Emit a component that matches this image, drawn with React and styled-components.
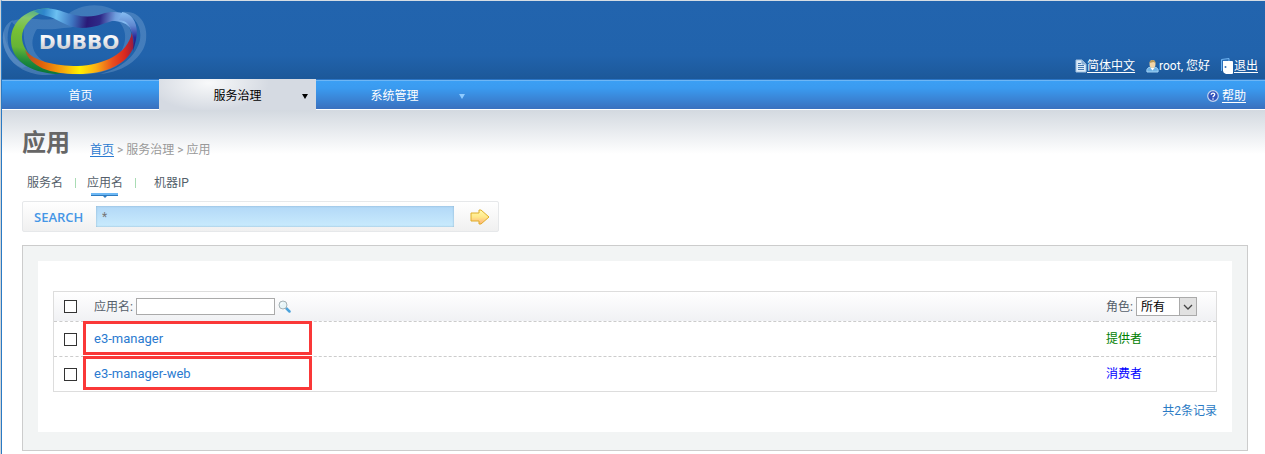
import styled, { createGlobalStyle } from "styled-components";

const menu = [
  { label: "首页" },
  { label: "服务治理", active: true, arrow: "#000000" },
  { label: "系统管理", arrow: "#8fcbff" },
];

const applications = [
  { name: "e3-manager", role: "提供者", color: "#008000" },
  { name: "e3-manager-web", role: "消费者", color: "#0000ff" },
];

const Logo = () => (
  <svg width="148" height="78" viewBox="2 1 148 78" role="img" aria-label="DUBBO">
    <defs>
      <linearGradient id="green" x1="50" x2="40" y1="8" y2="74" gradientUnits="userSpaceOnUse">
        <stop offset="0" stopColor="#3aa09a" />
        <stop offset="0.2" stopColor="#86c76a" />
        <stop offset="0.4" stopColor="#78c034" />
        <stop offset="0.65" stopColor="#66b436" />
        <stop offset="0.85" stopColor="#1d8a3c" />
        <stop offset="1" stopColor="#05713a" />
      </linearGradient>
      <linearGradient id="blue" x1="34" x2="138" y1="8" y2="22" gradientUnits="userSpaceOnUse">
        <stop offset="0" stopColor="#2f8fae" />
        <stop offset="0.1" stopColor="#2f86cc" />
        <stop offset="0.22" stopColor="#6cc0f2" />
        <stop offset="0.38" stopColor="#3d74c0" />
        <stop offset="0.52" stopColor="#2a1a78" />
        <stop offset="0.64" stopColor="#2f2a88" />
        <stop offset="0.78" stopColor="#6f9ede" />
        <stop offset="0.88" stopColor="#86bdf2" />
        <stop offset="1" stopColor="#3a5cb0" />
      </linearGradient>
      <linearGradient id="fire" x1="25" x2="134" y1="0" y2="0" gradientUnits="userSpaceOnUse">
        <stop offset="0" stopColor="#b0502c" />
        <stop offset="0.15" stopColor="#e0600c" />
        <stop offset="0.35" stopColor="#f7a80c" />
        <stop offset="0.5" stopColor="#fff000" />
        <stop offset="0.65" stopColor="#fbb014" />
        <stop offset="0.8" stopColor="#e8501e" />
        <stop offset="0.92" stopColor="#d8261e" />
        <stop offset="1" stopColor="#8e1f46" />
      </linearGradient>
      <linearGradient id="violet" x1="0" x2="0" y1="0" y2="1">
        <stop offset="0" stopColor="#86bdf2" />
        <stop offset="0.35" stopColor="#6088d0" />
        <stop offset="0.65" stopColor="#28289a" />
        <stop offset="1" stopColor="#2a1a6a" />
      </linearGradient>
      <linearGradient id="metal" x1="0" x2="0" y1="0" y2="1">
        <stop offset="0" stopColor="#ffffff" />
        <stop offset="0.4" stopColor="#f2f2f4" />
        <stop offset="1" stopColor="#b5b8be" />
      </linearGradient>
    </defs>
    <g fill="#a9c7e6" fillRule="evenodd">
      <path d="M12 21C28 15 48 24 66 16C80 2 106 2 120 14C134 28 136 46 124 60C112 73 84 78 58 72C30 66 22 46 24 28C18 26 12 25 12 21ZM37 29C27 44 34 60 54 66C84 72 112 66 122 50C130 34 122 20 110 16C94 14 84 28 64 28C52 30 44 29 37 29Z" opacity="0.22" />
      <path d="M13 20C0 26 1 44 7 54C15 70 36 78 56 74L46 71C30 70 16 62 10 50C6 40 7 28 13 20Z" opacity="0.26" />
      <path d="M122 12C142 10 148 28 146 40C144 56 126 72 100 74C122 68 136 56 140 40C142 28 136 16 122 12Z" opacity="0.26" />
      <path d="M4 30C4 46 14 58 28 66L22 68C6 62 0 42 4 30Z" opacity="0.16" />
    </g>
    <path d="M50 8C26 8 11 22 11 40C11 59 28 73 58 74L64 72C42 68 22 54 22 37C22 27 30 16 46 11Z" fill="url(#green)" />
    <path d="M25 50C34 61 54 66 78 66C102 65 128 55 132 32L134 46C128 64 106 74 78 74C50 74 30 67 25 50Z" fill="url(#fire)" />
    <path d="M34 11C44 7 54 8 64 12C78 17 92 18 102 14C114 10 128 12 134 21C137 26 137 34 136 40L131 30C128 23 120 21 112 21C102 24 94 28 82 28C66 28 58 18 46 16C41 15 38 13 34 11Z" fill="url(#blue)" />
    <path d="M122 12C134 14 139 26 136 40L133 51C134 42 134 36 131 30C130 25 127 21 119 20Z" fill="url(#violet)" />
    <text x="39" y="49" fontFamily="DejaVu Sans, sans-serif" fontSize="20" fontWeight="700" fill="url(#metal)">
      DUBBO
    </text>
  </svg>
);

const DocIcon = () => (
  <svg width="12" height="14" viewBox="0 0 12 14" aria-hidden="true">
    <path d="M1 1H7L11 5V13H1Z" fill="#dcebf8" stroke="#a3c3e2" />
    <path d="M7 1V5H11" fill="#8fb4da" stroke="#7fa7d0" />
    <path d="M3 4.5H6M3 6.5H9M3 8.5H9M3 10.5H9" stroke="#477bb2" />
  </svg>
);

const UserIcon = () => (
  <svg width="13" height="14" viewBox="0 0 13 14" aria-hidden="true">
    <path d="M1 13C0 9 3 8 6.500 8C10 8 13 9 12 13Z" fill="#6fb3e6" stroke="#a3d2f4" />
    <path d="M4.500 9L6.500 11.500L8.500 9Z" fill="#ffffff" />
    <ellipse cx="6.500" cy="5" rx="3" ry="4" fill="#f2d5a8" />
    <path d="M3.500 4C3.500 0 9.500 0 9.500 4L7.500 3Z" fill="#b39658" />
  </svg>
);

const DoorIcon = () => (
  <svg width="13" height="16" viewBox="0 0 13 16" aria-hidden="true">
    <path d="M0.500 13V1.500L8 0.500V3" fill="#2c70b8" stroke="#6fb3f0" />
    <path d="M2 3H11Q12 3 12 4V15Q12 16 11 16H5Q2 15 2 13Z" fill="#ffffff" />
    <circle cx="4.500" cy="9" r="1" fill="#3571b5" />
  </svg>
);

const HelpIcon = () => (
  <svg width="12" height="12" viewBox="0 0 12 12" aria-hidden="true">
    <circle cx="6" cy="6" r="5.300" fill="#3353bd" stroke="#c3d3ef" strokeWidth="1.200" />
    <path d="M4.200 4.800C4.200 2.400 7.900 2.600 7.700 4.700C7.600 5.900 6 5.900 6 7.300" fill="none" stroke="#ffffff" strokeWidth="1.300" />
    <circle cx="6" cy="9" r="0.800" fill="#ffffff" />
  </svg>
);

const ArrowIcon = () => (
  <svg width="20" height="16" viewBox="0 0 20 16" aria-hidden="true">
    <defs>
      <linearGradient id="gold" x1="0" x2="0" y1="0" y2="1">
        <stop offset="0" stopColor="#fffbb0" />
        <stop offset="0.5" stopColor="#ffe88a" />
        <stop offset="1" stopColor="#ffb07a" />
      </linearGradient>
    </defs>
    <path d="M1 4H9V1H11L19 8L11 15H9V12H1Z" fill="url(#gold)" stroke="#dfae28" strokeLinejoin="round" />
  </svg>
);

const LensIcon = () => (
  <svg width="13" height="13" viewBox="0 0 13 13" aria-hidden="true">
    <path d="M8 8L11.500 11.500" stroke="#4ba3dc" strokeWidth="2.500" strokeLinecap="round" />
    <circle cx="5" cy="5" r="4" fill="#e6f4f7" stroke="#a5b1b5" />
    <path d="M3 5C3 3.500 4 3 5 3" fill="none" stroke="#ffffff" />
  </svg>
);

const App = () => {
  return (
    <>
      <GlobalStyle />
      <Page>
        <Header>
          <Logo />
          <UserBar>
            <IconLink href="#lang">
              <DocIcon />
              <span>简体中文</span>
            </IconLink>
            <UserName>
              <UserIcon />
              root, 您好
            </UserName>
            <IconLink href="#logout">
              <DoorIcon />
              <span>退出</span>
            </IconLink>
          </UserBar>
        </Header>
        <Nav>
          {menu.map((item) => (
            <NavItem key={item.label} href="#nav" $active={item.active}>
              <span>{item.label}</span>
              {item.arrow && <Caret $color={item.arrow} />}
            </NavItem>
          ))}
          <Help>
            <IconLink href="#help" $gap="3px">
              <HelpIcon />
              <span>帮助</span>
            </IconLink>
          </Help>
        </Nav>
        <Content>
          <TitleRow>
            <h1>应用</h1>
            <Breadcrumb>
              <a href="#home">首页</a> &gt; 服务治理 &gt; 应用
            </Breadcrumb>
          </TitleRow>
          <Tabs>
            <Tab href="#service">服务名</Tab>
            <Divider />
            <Tab href="#application" $active>
              应用名
            </Tab>
            <Divider />
            <Tab href="#address" $last>
              机器IP
            </Tab>
          </Tabs>
          <SearchBar>
            <label htmlFor="keyword">SEARCH</label>
            <SearchInput id="keyword" defaultValue="*" />
            <IconButton type="button" aria-label="搜索">
              <ArrowIcon />
            </IconButton>
          </SearchBar>
          <Panel>
            <Sheet>
              <Table>
                <thead>
                  <tr>
                    <CheckHead>
                      <Checkbox type="checkbox" aria-label="全选" />
                    </CheckHead>
                    <th>
                      <Field>
                        <label htmlFor="name">应用名:</label>
                        <FilterInput id="name" />
                        <IconButton type="button" aria-label="筛选">
                          <LensIcon />
                        </IconButton>
                      </Field>
                    </th>
                    <RoleHead>
                      <Field>
                        <label htmlFor="role">角色:</label>
                        <SelectBox>
                          <select id="role">
                            <option>所有</option>
                            <option>提供者</option>
                            <option>消费者</option>
                          </select>
                          <SelectArrow>
                            <svg width="10" height="6" viewBox="0 0 10 6" aria-hidden="true">
                              <path d="M1 1L5 5L9 1" fill="none" stroke="#444444" strokeWidth="1.300" />
                            </svg>
                          </SelectArrow>
                        </SelectBox>
                      </Field>
                    </RoleHead>
                  </tr>
                </thead>
                <tbody>
                  {applications.map((app) => (
                    <tr key={app.name}>
                      <CheckCell>
                        <Checkbox type="checkbox" aria-label={app.name} />
                      </CheckCell>
                      <NameCell>
                        <a href="#app">{app.name}</a>
                        <Mark />
                      </NameCell>
                      <RoleCell $color={app.color}>{app.role}</RoleCell>
                    </tr>
                  ))}
                </tbody>
              </Table>
              <Total>共2条记录</Total>
            </Sheet>
          </Panel>
        </Content>
      </Page>
    </>
  );
};

const GlobalStyle = createGlobalStyle`
  * {
    box-sizing: border-box;
  }
  body {
    margin: 0;
    background: #d0d3d6;
    font: 12px/18px Roboto, "Noto Sans CJK SC", sans-serif;
    color: #555f6b;
  }
  input, select, button {
    font: inherit;
    margin: 0;
  }
  svg {
    display: block;
    flex: none;
  }
`;

const Page = styled.div`
  min-height: 100vh;
  margin-left: 1px;
  border-left: 1px solid #2a7ac4;
  border-top: 1px solid #d6dde4;
  background: #ffffff;
`;

const Header = styled.header`
  height: 78px;
  display: flex;
  justify-content: space-between;
  align-items: flex-end;
  background: linear-gradient(#2264ae, #2163ac 70%, #1c5899);
`;

const UserBar = styled.div`
  height: 26px;
  display: flex;
  align-items: center;
  gap: 11px;
  padding-right: 7px;
  color: #ffffff;
`;

const IconLink = styled.a`
  display: flex;
  align-items: center;
  gap: ${(props) => props.$gap || 0};
  color: #ffffff;
  text-decoration: none;
  span {
    text-decoration: underline;
    text-underline-offset: 2px;
  }
`;

const UserName = styled.span`
  display: flex;
  align-items: center;
`;

const Nav = styled.nav`
  height: 31px;
  display: flex;
  border-bottom: 1px solid #ffffff;
  background: linear-gradient(#2a74c4 1px, #6db6f5 1px, #6db6f5 2px, #3b9ff4 2px, #3a9bf0 30%, #3a70be);
`;

const NavItem = styled.a`
  width: 157px;
  height: 31px;
  display: grid;
  grid-template-columns: 22px 1fr 22px;
  align-items: center;
  padding-top: 3px;
  color: ${(props) => (props.$active ? "#000000" : "#ffffff")};
  background: ${(props) =>
    props.$active ? "radial-gradient(ellipse 60px 28px at 50px 4px, #f8f9fa, #d5dae2)" : "none"};
  text-align: center;
  text-decoration: none;
  span {
    grid-column: 2;
  }
`;

const Caret = styled.i`
  justify-self: center;
  border: 3px solid transparent;
  border-top: 5px solid ${(props) => props.$color};
  border-bottom: 0;
`;

const Help = styled.div`
  display: flex;
  align-items: center;
  margin-left: auto;
  padding: 3px 19px 0 0;
`;

const Content = styled.main`
  padding: 17px 17px 3px 20px;
  background: linear-gradient(#d3d9e0, #ffffff 44px);
`;

const TitleRow = styled.div`
  display: flex;
  align-items: flex-end;
  gap: 20px;
  h1 {
    margin: 0;
    font-size: 24px;
    line-height: 32px;
    color: #666666;
  }
`;

const Breadcrumb = styled.div`
  color: #999999;
  a {
    color: #2a7ad0;
    text-underline-offset: 2px;
  }
`;

const Tabs = styled.div`
  display: flex;
  align-items: center;
  height: 24px;
  margin: 12px 0 6px;
  padding-left: 5px;
`;

const Tab = styled.a`
  position: relative;
  height: 24px;
  line-height: 24px;
  margin-left: ${(props) => (props.$last ? "7px" : 0)};
  color: #555f6b;
  text-decoration: none;
  &::after {
    content: "";
    display: ${(props) => (props.$active ? "block" : "none")};
    position: absolute;
    left: 4px;
    right: 5px;
    bottom: -1px;
    height: 3px;
    background: linear-gradient(#6db8f5 2px, #2f7cc0 2px);
  }
  &::before {
    content: "";
    display: ${(props) => (props.$active ? "block" : "none")};
    position: absolute;
    left: 50%;
    top: 100%;
    margin: 1px 0 0 -2px;
    border: 2px solid transparent;
    border-top-color: #2f7cc0;
    border-bottom: 0;
  }
`;

const Divider = styled.i`
  width: 1px;
  height: 10px;
  margin: 0 11px 0 12px;
  background: #a9dcb4;
`;

const SearchBar = styled.form`
  display: flex;
  align-items: center;
  width: 477px;
  max-width: 100%;
  height: 31px;
  padding: 0 8px 0 11px;
  border: 1px solid #e6e8ea;
  border-radius: 2px;
  background: linear-gradient(#ffffff, #f0f0f0);
  label {
    width: 62px;
    font-family: "Open Sans", sans-serif;
    font-size: 13px;
    font-weight: 600;
    color: #4596e6;
  }
`;

const SearchInput = styled.input`
  flex: 1;
  min-width: 0;
  height: 21px;
  margin-right: 16px;
  padding: 0 6px;
  border: 0;
  border-radius: 0;
  color: #777777;
  background: linear-gradient(#b2d8f7, #c9ebfd);
  box-shadow: inset 0 0 2px #7fa9c4;
`;

const IconButton = styled.button`
  padding: 0;
  border: 0;
  background: none;
  cursor: pointer;
`;

const Panel = styled.section`
  margin-top: 13px;
  padding: 15px 15px 18px;
  border: 1px solid #cccccc;
  background: #f2f4f4;
`;

const Sheet = styled.div`
  padding: 30px 15px 12px;
  background: #ffffff;
`;

const Table = styled.table`
  width: 100%;
  border: 1px solid #dddddd;
  border-spacing: 0;
  table-layout: fixed;
  th {
    height: 29px;
    padding: 0 10px;
    font-weight: 400;
    text-align: left;
    background: linear-gradient(#ffffff, #f0f1f4);
  }
  td {
    height: 35px;
    padding: 0 10px;
    border-top: 1px dashed #cccccc;
  }
`;

const CheckHead = styled.th`
  width: 30px;
  && {
    padding-right: 0;
  }
`;

const CheckCell = styled.td`
  && {
    padding-right: 0;
  }
`;

const RoleHead = styled.th`
  width: 120px;
`;

const Checkbox = styled.input`
  appearance: none;
  display: block;
  width: 13px;
  height: 13px;
  border: 1px solid #333333;
  background: #ffffff;
  &:checked {
    background: #2a7ad0;
  }
`;

const Field = styled.div`
  display: flex;
  align-items: center;
  gap: 3px;
`;

const FilterInput = styled.input`
  width: 139px;
  height: 17px;
  padding: 0 2px;
  border: 1px solid #aaaaaa;
`;

const SelectBox = styled.div`
  position: relative;
  width: 61px;
  select {
    appearance: none;
    display: block;
    width: 100%;
    height: 19px;
    padding: 0 4px;
    border: 1px solid #aaaaaa;
    border-radius: 0;
    color: #000000;
    background: #ffffff;
  }
`;

const SelectArrow = styled.span`
  position: absolute;
  top: 0;
  right: 0;
  width: 18px;
  height: 19px;
  display: grid;
  place-items: center;
  border: 1px solid #aaaaaa;
  background: #e1e1e1;
  pointer-events: none;
`;

const NameCell = styled.td`
  position: relative;
  font-size: 13px;
  a {
    color: #2a7ad0;
    text-decoration: none;
  }
`;

const Mark = styled.span`
  position: absolute;
  top: -1px;
  left: -1px;
  width: 229px;
  height: 34px;
  border: 3px solid #fa3838;
  pointer-events: none;
`;

const RoleCell = styled.td`
  color: ${(props) => props.$color};
`;

const Total = styled.div`
  margin-top: 10px;
  text-align: right;
  color: #2a7ac4;
`;

export default App;
